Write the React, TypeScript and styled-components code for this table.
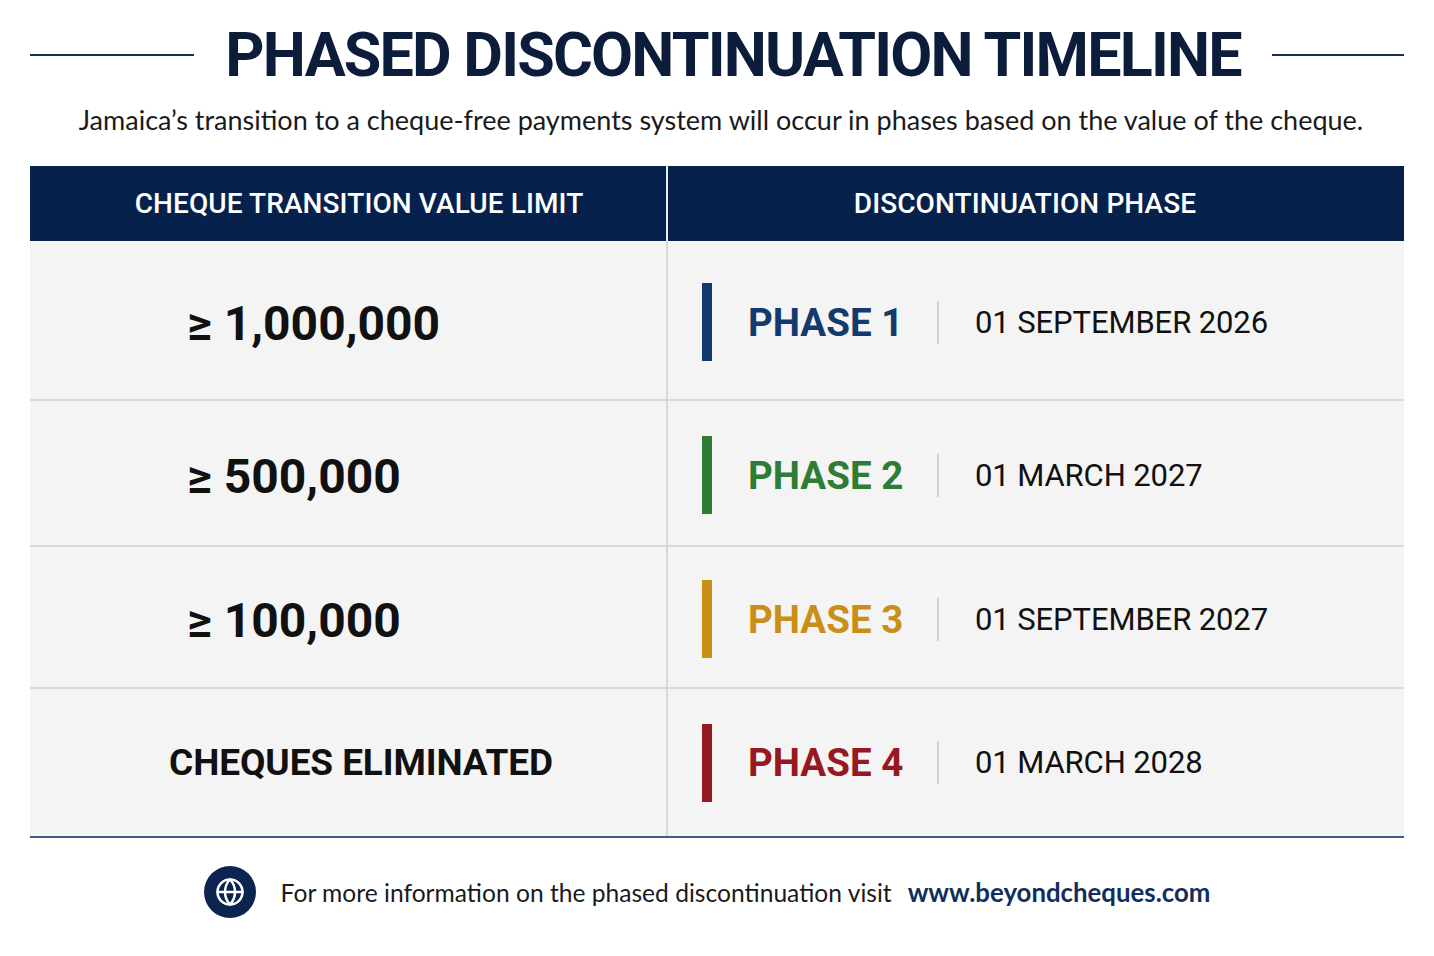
import React from 'react'
import styled, { createGlobalStyle } from 'styled-components'
import { Globe } from 'lucide-react'

const GlobalStyle = createGlobalStyle`
  html, body {
    margin: 0;
    padding: 0;
    background: #ffffff;
  }
  body {
    font-family: Roboto, "Liberation Sans", sans-serif;
    color: #111;
  }
`

interface Row {
    value: string
    centered?: boolean
    phase: string
    color: string
    date: string
    height: number
}

const rows: Row[] = [
    { value: '≥ 1,000,000', phase: 'PHASE 1', color: '#123a6d', date: '01 SEPTEMBER 2026', height: 160 },
    { value: '≥ 500,000', phase: 'PHASE 2', color: '#2f7d34', date: '01 MARCH 2027', height: 146 },
    { value: '≥ 100,000', phase: 'PHASE 3', color: '#c98f17', date: '01 SEPTEMBER 2027', height: 142 },
    { value: 'CHEQUES ELIMINATED', centered: true, phase: 'PHASE 4', color: '#961820', date: '01 MARCH 2028', height: 147 },
]

export default function App(): JSX.Element {
    return (
        <Page>
            <GlobalStyle />
            <TitleRow>
                <Rule grow={164} />
                <Title>PHASED DISCONTINUATION TIMELINE</Title>
                <Rule grow={132} />
            </TitleRow>
            <Subtitle>
                Jamaica’s transition to a cheque-free payments system will occur in phases based on the value of the cheque.
            </Subtitle>

            <Table>
                <HeadCell divider shift={22}>CHEQUE TRANSITION VALUE LIMIT</HeadCell>
                <HeadCell shift={-22}>DISCONTINUATION PHASE</HeadCell>

                {rows.map((r, i) => (
                    <React.Fragment key={i}>
                        <ValueCell centered={r.centered} last={i === rows.length - 1} style={{ height: r.height }}>
                            <Value small={r.centered}>{r.value}</Value>
                        </ValueCell>
                        <PhaseCell last={i === rows.length - 1}>
                            <Bar color={r.color} />
                            <PhaseLabel color={r.color}>{r.phase}</PhaseLabel>
                            <Divider />
                            <DateText>{r.date}</DateText>
                        </PhaseCell>
                    </React.Fragment>
                ))}
            </Table>

            <Footer>
                <GlobeBadge>
                    <Globe size={30} color="#ffffff" strokeWidth={2} />
                </GlobeBadge>
                <FooterText>For more information on the phased discontinuation visit</FooterText>
                <Link>www.beyondcheques.com</Link>
            </Footer>
        </Page>
    )
}

const Page = styled.div`
    width: 1434px;
    padding: 22px 30px 0;
    box-sizing: border-box;
`

const TitleRow = styled.div`
    display: flex;
    align-items: center;
    gap: 31px;
    height: 66px;
`

const Rule = styled.div<{ grow: number }>`
    flex: ${p => p.grow} 1 0;
    height: 2px;
    background: #1b2f52;
`

const Title = styled.h1`
    margin: 0;
    font-family: Roboto, "Liberation Sans", sans-serif;
    font-weight: 700;
    font-size: 61px;
    letter-spacing: -1.8px;
    line-height: 66px;
    color: #0c1d3b;
    white-space: nowrap;
`

const Subtitle = styled.p`
    margin: 16px 0 0;
    padding-left: 8px;
    text-align: center;
    font-family: Lato, "Open Sans", sans-serif;
    font-size: 27px;
    line-height: 32px;
    color: #1a1a1a;
    letter-spacing: 0px;
`

const Table = styled.div`
    margin-top: 30px;
    display: grid;
    grid-template-columns: 638px 1fr;
    border-bottom: 2px solid #425d88;
`

const HeadCell = styled.div<{ divider?: boolean; shift: number }>`
    height: 75px;
    background: #06224c;
    color: #ffffff;
    display: flex;
    align-items: center;
    justify-content: center;
    box-sizing: border-box;
    padding-left: ${p => (p.shift > 0 ? p.shift : 0)}px;
    padding-right: ${p => (p.shift < 0 ? -p.shift : 0)}px;
    font-weight: 500;
    font-size: 28px;
    letter-spacing: 0.1px;
    border-right: ${p => (p.divider ? '2px solid #e9edf3' : 'none')};
`

const ValueCell = styled.div<{ centered?: boolean; last?: boolean }>`
    background: #f4f4f4;
    display: flex;
    align-items: center;
    justify-content: ${p => (p.centered ? 'center' : 'flex-start')};
    padding-left: ${p => (p.centered ? '26px' : '157px')};
    padding-top: ${p => (p.last ? '0' : '6px')};
    box-sizing: border-box;
    border-right: 2px solid #d8d8d8;
    border-bottom: ${p => (p.last ? 'none' : '2px solid #dadada')};
`

const Value = styled.span<{ small?: boolean }>`
    font-weight: 700;
    font-size: ${p => (p.small ? '37px' : '48px')};
    letter-spacing: ${p => (p.small ? '-0.1px' : '0px')};
    color: #111;
    white-space: nowrap;
`

const PhaseCell = styled.div<{ last?: boolean }>`
    background: #f4f4f4;
    display: flex;
    align-items: center;
    padding-left: 34px;
    padding-top: ${p => (p.last ? '0' : '4px')};
    border-bottom: ${p => (p.last ? 'none' : '2px solid #dadada')};
`

const Bar = styled.div<{ color: string }>`
    width: 10px;
    height: 78px;
    background: ${p => p.color};
    margin-right: 36px;
`

const PhaseLabel = styled.span<{ color: string }>`
    width: 189px;
    font-weight: 700;
    font-size: 38.5px;
    color: ${p => p.color};
    white-space: nowrap;
`

const Divider = styled.div`
    width: 2px;
    height: 43px;
    background: #d2d2d2;
    margin-right: 36px;
`

const DateText = styled.span`
    font-weight: 400;
    font-size: 31px;
    letter-spacing: -0.1px;
    color: #111;
    white-space: nowrap;
`

const Footer = styled.div`
    height: 108px;
    display: flex;
    align-items: center;
    justify-content: center;
    padding-right: 20px;
`

const GlobeBadge = styled.div`
    width: 52px;
    height: 52px;
    border-radius: 50%;
    background: #0b2550;
    display: flex;
    align-items: center;
    justify-content: center;
    margin-right: 25px;
`

const FooterText = styled.span`
    font-family: Lato, "Open Sans", sans-serif;
    font-size: 24.6px;
    color: #1a1a1a;
    margin-right: 16px;
`

const Link = styled.span`
    font-family: Lato, "Open Sans", sans-serif;
    font-weight: 700;
    font-size: 25.8px;
    color: #122e5c;
`
